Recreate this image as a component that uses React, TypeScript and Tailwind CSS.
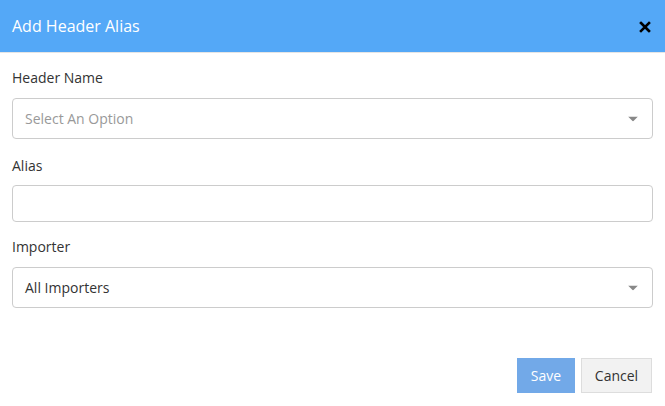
import React from 'react';

const Caret = () => (
  <svg width="10" height="5" viewBox="0 0 10 5" className="absolute right-[14px] top-1/2 -translate-y-1/2">
    <path d="M0 0 L10 0 L5 5 Z" fill="#888" />
  </svg>
);

const App = () => {
  return (
    <div className="w-[665px] h-[406px] bg-white font-['Open_Sans',sans-serif] text-[#333]">
      <div className="h-[53px] bg-[#54a8f7] border-b border-[#e5e5e5] flex items-center justify-between px-3">
        <h1 className="text-[16px] text-white">Add Header Alias</h1>
        <svg width="12" height="12" viewBox="0 0 12 12" className="mr-[2px] mt-[1px]">
          <path d="M2 2 L10 10 M10 2 L2 10" stroke="#000" strokeWidth="2.6" strokeLinecap="square" />
        </svg>
      </div>

      <div className="px-3 pt-[15px]">
        <label className="block text-[14px] leading-[20px]">Header Name</label>
        <div className="relative mt-[10px] h-[41px] border border-[#ccc] rounded-[4px] flex items-center px-3 text-[14px] text-[#999]">
          Select An Option
          <Caret />
        </div>

        <label className="block text-[14px] leading-[20px] mt-[17px]">Alias</label>
        <div className="mt-[9px] h-[37px] border border-[#ccc] rounded-[4px]" />

        <label className="block text-[14px] leading-[20px] mt-[15px]">Importer</label>
        <div className="relative mt-[10px] h-[41px] border border-[#ccc] rounded-[4px] flex items-center px-3 text-[14px] text-[#333]">
          All Importers
          <Caret />
        </div>

        <div className="flex justify-end gap-[6px] mt-[50px] pr-px">
          <button className="w-[58px] h-[35px] bg-[#72a9e8] text-white text-[14px]">Save</button>
          <button className="w-[71px] h-[35px] bg-[#f2f2f2] border border-[#ddd] text-[#333] text-[14px]">Cancel</button>
        </div>
      </div>
    </div>
  );
};

export default App;
